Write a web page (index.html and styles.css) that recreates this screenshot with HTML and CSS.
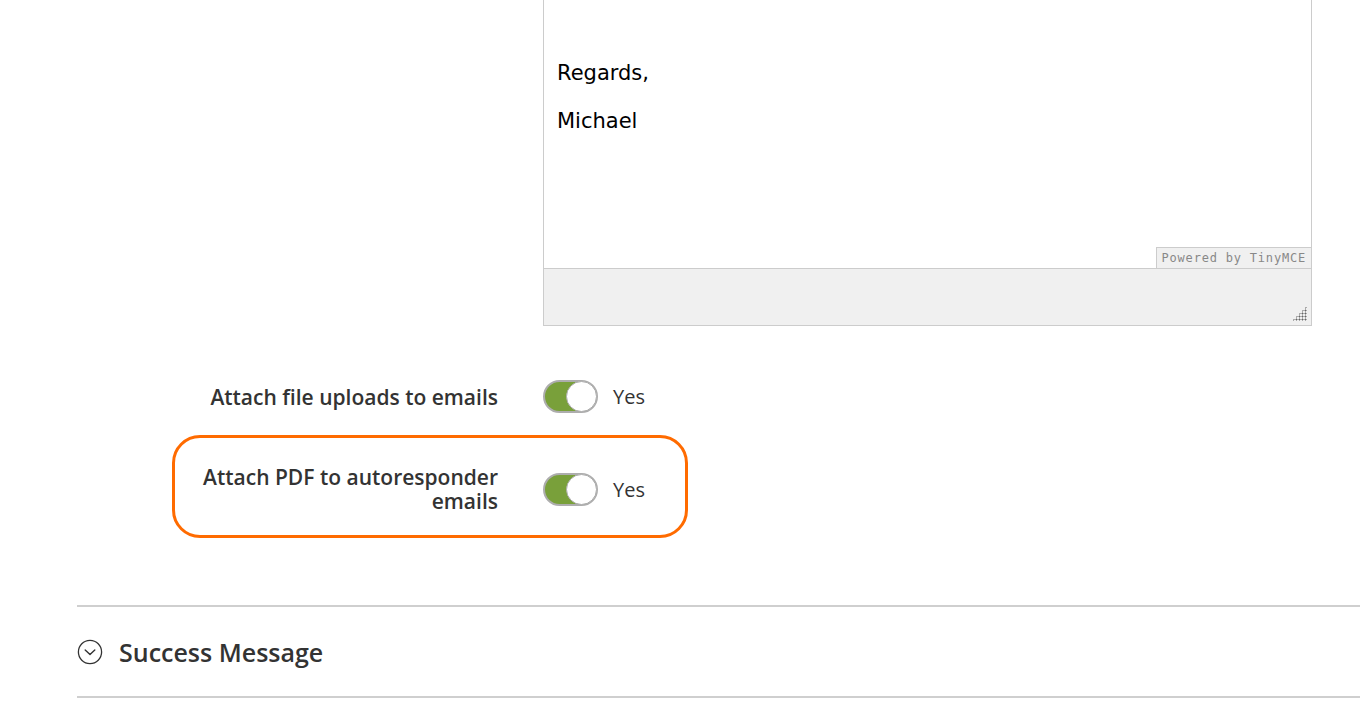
FILE: index.html
```html
<!DOCTYPE html>
<html lang="en">
<head>
    <meta charset="UTF-8">
    <title>Form Settings - Autoresponder</title>
    <link rel="stylesheet" href="styles.css">
</head>
<body>
    <div class="page">
        <!-- Autoresponder message editor -->
        <div class="field-row editor-row">
            <div class="field-label"></div>
            <div class="editor">
                <div class="editor-body">
                    <p>Regards,</p>
                    <p>Michael</p>
                    <span class="powered">Powered by TinyMCE</span>
                </div>
                <div class="editor-status">
                    <span class="grip"></span>
                </div>
            </div>
        </div>

        <div class="field-row toggle-row">
            <label class="field-label">Attach file uploads to emails</label>
            <div class="control">
                <span class="switch on"><span class="knob"></span></span>
                <span class="switch-text">Yes</span>
            </div>
        </div>

        <div class="field-row toggle-row highlighted">
            <label class="field-label">Attach PDF to autoresponder emails</label>
            <div class="control">
                <span class="switch on"><span class="knob"></span></span>
                <span class="switch-text">Yes</span>
            </div>
            <span class="highlight-ring"></span>
        </div>

        <!-- Collapsed section -->
        <div class="section">
            <svg class="section-icon" width="26" height="26" viewBox="0 0 26 26">
                <circle cx="13" cy="13" r="11.6" fill="none" stroke="#333" stroke-width="1.3"/>
                <path d="M8.2 11 L13 15.6 L17.8 11" fill="none" stroke="#333" stroke-width="1.4" stroke-linecap="round" stroke-linejoin="round"/>
            </svg>
            <span class="section-title">Success Message</span>
        </div>
    </div>
</body>
</html>
```

FILE: styles.css
```css
body {
    margin: 0;
    padding: 0;
    background-color: #fff;
    font-family: "Open Sans", Arial, sans-serif;
    color: #333;
}

.page {
    padding-left: 77px;
}

.field-row {
    display: grid;
    grid-template-columns: 421px 1fr;
    column-gap: 45px;
    align-items: center;
}

.field-label {
    justify-self: end;
    max-width: 300px;
    text-align: right;
    font-size: 21px;
    font-weight: 600;
    line-height: 24px;
    color: #333;
}

/* TinyMCE editor */
.editor {
    width: 767px;
    border: 1px solid #ccc;
    border-top: none;
}

.editor-body {
    position: relative;
    height: 268px;
    padding: 0 13px;
    box-sizing: border-box;
    font-family: "DejaVu Sans", Verdana, sans-serif;
    font-size: 21px;
    color: #000;
    overflow: hidden;
}

.editor-body p {
    margin: 0;
    padding-top: 61px;
    line-height: 24px;
}

.editor-body p + p {
    padding-top: 24px;
}

.powered {
    position: absolute;
    right: 0;
    bottom: 0;
    padding: 3px 5px 2px 5px;
    background-color: #f0f0f0;
    border: 1px solid #ccc;
    border-right: none;
    border-bottom: none;
    font-family: "DejaVu Sans Mono", monospace;
    font-size: 12px;
    line-height: 15px;
    letter-spacing: 0.8px;
    color: #888;
}

.editor-status {
    height: 56px;
    border-top: 1px solid #ccc;
    background-color: #f0f0f0;
    position: relative;
}

.grip {
    position: absolute;
    right: 4px;
    bottom: 4px;
    width: 15px;
    height: 15px;
    background-image: linear-gradient(#555 0 0);
    background-image: radial-gradient(#666 0.9px, transparent 1.1px);
    background-size: 3px 3px;
    clip-path: polygon(100% 0, 100% 100%, 0 100%);
}

/* toggles */
.toggle-row {
    margin-top: 54px;
}

.toggle-row.highlighted {
    margin-top: 52px;
    position: relative;
}

.control {
    display: flex;
    align-items: center;
    gap: 15px;
}

.switch {
    position: relative;
    display: inline-block;
    width: 51px;
    height: 29px;
    border: 2px solid #adadad;
    border-radius: 17px;
    background-color: #79a03a;
}

.switch .knob {
    position: absolute;
    top: -1px;
    right: -1px;
    width: 29px;
    height: 29px;
    border: 1px solid #adadad;
    border-radius: 50%;
    background-color: #fff;
}

.switch-text {
    font-size: 20px;
    color: #333;
}

.highlight-ring {
    position: absolute;
    left: 95px;
    top: -30px;
    width: 510px;
    height: 97px;
    border: 3px solid #ff6b00;
    border-radius: 28px;
    pointer-events: none;
}

/* collapsed section */
.section {
    margin-top: 92px;
    height: 89px;
    display: flex;
    align-items: center;
    gap: 16px;
    border-top: 2px solid #cfcfcf;
    border-bottom: 2px solid #cfcfcf;
}

.section-title {
    font-size: 25px;
    font-weight: 600;
    color: #333;
}
```
